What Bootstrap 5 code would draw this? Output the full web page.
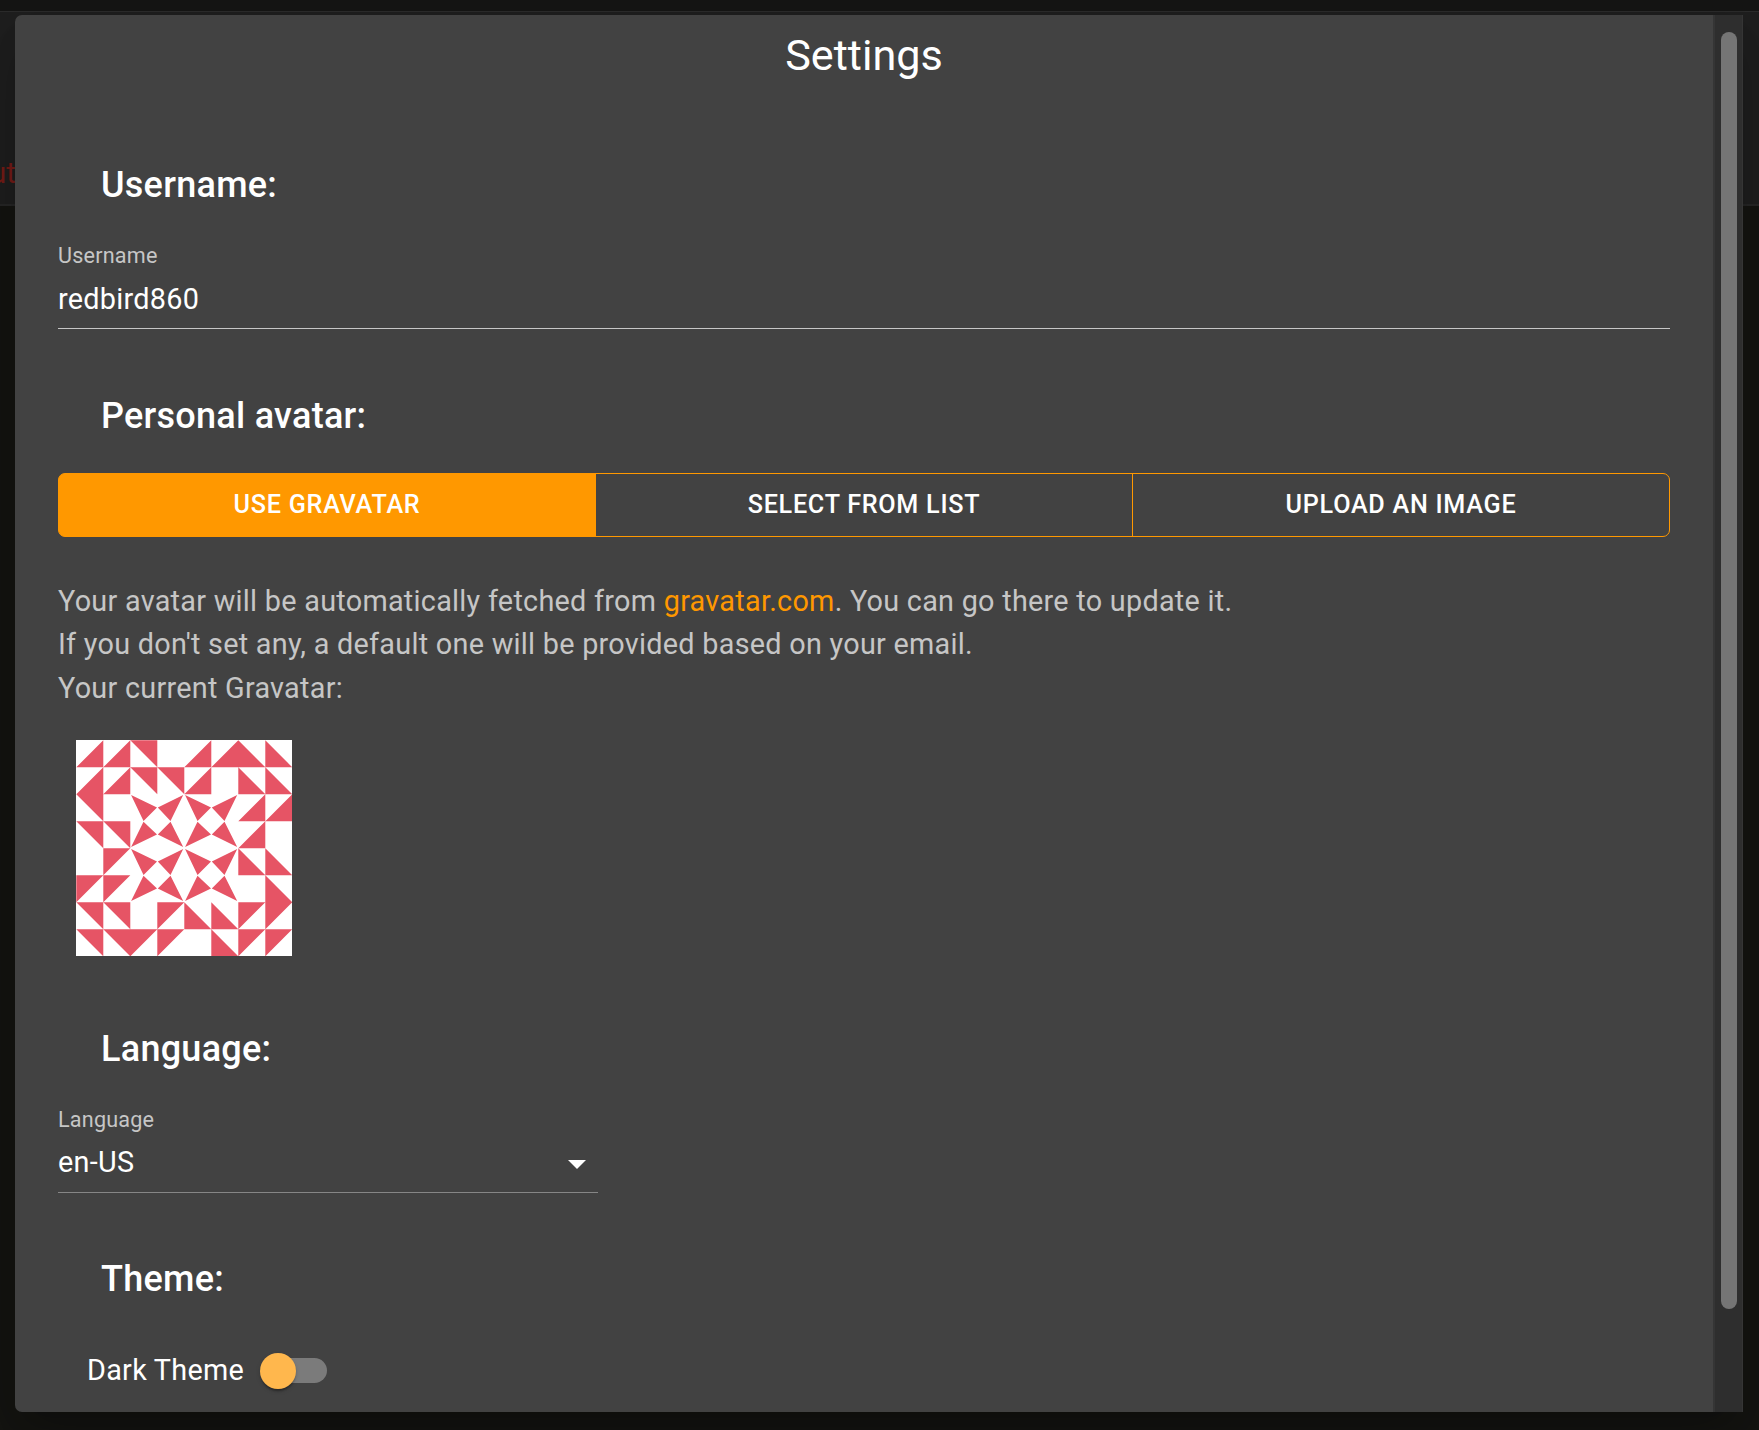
<!DOCTYPE html>
<html lang="en">
<head>
<meta charset="utf-8">
<meta name="viewport" content="width=device-width, initial-scale=1">
<title>Settings</title>
<link href="https://cdn.jsdelivr.net/npm/bootstrap@5.3.0/dist/css/bootstrap.min.css" rel="stylesheet">
<style>
  body { font-family: Roboto, "Liberation Sans", sans-serif; font-size: 28.8px; line-height: 43.2px; letter-spacing: .27px; color: #fff; background: #141411; height: 1430px; overflow: hidden; }
  .behind { z-index: 0; }
  .behind-top { height: 11px; background: #151514; }
  .behind-panel { height: 195px; background: #1e1e1e; border-top: 1px solid #2b2b2b; border-bottom: 2px solid #262626; padding-top: 140px; }
  .behind-link { width: 16px; color: #731b16; direction: rtl; white-space: nowrap; }
  .dialog { margin: 15px 16px 18px 15px; height: 1397px; z-index: 1; border-radius: 7px 0 0 7px; box-shadow: 0 20px 27px -10px rgba(0,0,0,.2), 0 20px 60px 5px rgba(0,0,0,.16); }
  .dialog-pane { background: #424242; padding: 12px 43px 0; border-radius: 7px 0 0 7px; width: 1698px; }
  .dialog-title { font-size: 43.2px; line-height: 58px; font-weight: 400; letter-spacing: 0; }
  .section-title { font-size: 36px; line-height: 58px; font-weight: 500; letter-spacing: .27px; padding-left: 43px; }
  .field-label { display: block; font-size: 21.6px; line-height: 22px; letter-spacing: .2px; margin-top: 31px; color: #c6c6c6; }
  .field-input { font-size: 28.8px; line-height: 34px; letter-spacing: .27px; margin-top: 14px; padding: 0 0 12px; border-bottom: 1px solid #c6c6c6; border-radius: 0; }
  .field-input, .field-input:focus { color: #fff; outline: 0; }
  .field-select { width: 540px; border-bottom-color: #868686; padding-bottom: 13px; }
  .field-select svg { margin: 6px 12px 0 0; }
  .avatar-modes { height: 64px; margin-top: 28px; }
  .avatar-modes .btn { --bs-btn-color: #fff; --bs-btn-border-color: #ff9800; --bs-btn-active-bg: #ff9800; --bs-btn-active-border-color: #ff9800; --bs-btn-hover-color: #fff; --bs-btn-border-radius: 7px; --bs-btn-active-color: #fff; flex: 1 1 0; font-size: 25.2px; font-weight: 500; line-height: 44px; letter-spacing: .72px; padding: 9px 0; text-transform: uppercase; }
  .avatar-modes .btn + .btn { margin-left: -1.8px; }
  .hint { margin-top: 43.2px; color: #c6c6c6; }
  .hint a { color: #ff9800; }
  .gravatar { display: block; margin: 30.2px 0 0 18px; }
  .theme-row { margin: 41px 0 0 29px; gap: 16px; }
  .switch-track { width: 61px; height: 25px; margin-left: 6px; border-radius: 13px; background: #7b7b7b; }
  .switch-thumb { display: block; width: 36px; height: 36px; margin: -5px 0 0 -6px; border-radius: 50%; background: #ffb74d; box-shadow: 0 4px 2px -2px rgba(0,0,0,.2), 0 2px 2px rgba(0,0,0,.14), 0 2px 5px rgba(0,0,0,.12); }
  .scroll-track { width: 30px; background: #2e2e2e; border-left: 2px solid #353535; border-right: 1px solid #353535; padding: 17px 5px 0 6px; }
  .scroll-thumb { width: 16px; height: 1277px; border-radius: 8px; background: #757575; }
</style>
<script src="https://cdn.jsdelivr.net/npm/bootstrap@5.3.0/dist/js/bootstrap.bundle.min.js"></script>
</head>
<body>
<div class="behind position-absolute top-0 start-0 w-100">
  <div class="behind-top"></div>
  <div class="behind-panel"><div class="behind-link overflow-hidden">ut</div></div>
</div>

<main class="dialog position-relative d-flex">
  <div class="dialog-pane">
    <h1 class="dialog-title text-center mb-0">Settings</h1>

    <section style="margin-top:71px">
      <h2 class="section-title mb-0">Username:</h2>
      <label class="field-label" for="username">Username</label>
      <input id="username" class="form-control-plaintext field-input d-block w-100" type="text" value="redbird860">
    </section>

    <section style="margin-top:58px">
      <h2 class="section-title mb-0">Personal avatar:</h2>
      <div class="avatar-modes btn-group d-flex" role="group">
        <button class="btn active" type="button">Use Gravatar</button>
        <button class="btn" type="button">Select from list</button>
        <button class="btn" type="button">Upload an image</button>
      </div>
      <p class="hint mb-0">Your avatar will be automatically fetched from <a class="text-decoration-none" href="#">gravatar.com</a>. You can go there to update it.<br>If you don't set any, a default one will be provided based on your email.<br>Your current Gravatar:</p>
      <svg class="gravatar" width="216" height="216" viewBox="0 0 8 8" role="img" aria-label="Gravatar">
        <rect width="8" height="8" fill="#fff"/>
        <defs>
          <path id="star" d="M.04.04 1 .5 .5 1zM1.97.04 1.03.5 1.5 1zM.04 1.96 .5 1.03 1 1.5zM1.97 1.96 1.5 1.03 1.03 1.5z"/>
        </defs>
        <g fill="#e65465">
          <path transform="translate(.011 .011)" d="M0 1L1 0V1zM1 1L2 0V1zM2 0H3V1zM4 1L5 0V1zM5 1L6 0V1zM6 0L7 1H6zM7 0L8 1H7z
            M0 2L1 1V2zM1 2L2 1V2zM2 1H3V2zM3 1H4V2zM4 2L5 1V2zM6 1L7 2H6zM7 1L8 2H7z
            M0 2H1V3zM6 3L7 2V3zM7 3L8 2V3z
            M0 3H1V4zM1 3H2V4zM6 4L7 3V4z
            M1 4H2L1 5zM6 4L7 5H6zM7 4L8 5H7z
            M0 5H1L0 6zM1 5H2L1 6zM7 5L8 6H7z
            M0 6H1V7zM1 6H2V7zM3 6H4L3 7zM4 6L5 7H4zM5 6L6 7H5zM6 6H7L6 7zM7 6H8L7 7z
            M0 7H1V8zM1 7H2V8zM2 7H3L2 8zM3 7H4L3 8zM5 7L6 8H5zM6 7H7L6 8zM7 7H8L7 8z"/>
          <use href="#star" x="2" y="2"/><use href="#star" x="4" y="2"/>
          <use href="#star" x="2" y="4"/><use href="#star" x="4" y="4"/>
        </g>
      </svg>
    </section>

    <section style="margin-top:64px">
      <h2 class="section-title mb-0">Language:</h2>
      <span class="field-label">Language</span>
      <div class="field-input field-select d-flex justify-content-between align-items-center" role="combobox" tabindex="0">
        <span>en-US</span>
        <svg width="18" height="9" viewBox="0 0 18 9"><path d="M0 0H18L9 9z" fill="#fff"/></svg>
      </div>
    </section>

    <section style="margin-top:57px">
      <h2 class="section-title mb-0">Theme:</h2>
      <div class="theme-row d-flex align-items-center">
        <span>Dark Theme</span>
        <div class="switch-track" role="switch" aria-checked="false"><span class="switch-thumb"></span></div>
      </div>
    </section>
  </div>
  <div class="scroll-track flex-shrink-0"><div class="scroll-thumb"></div></div>
</main>
</body>
</html>
